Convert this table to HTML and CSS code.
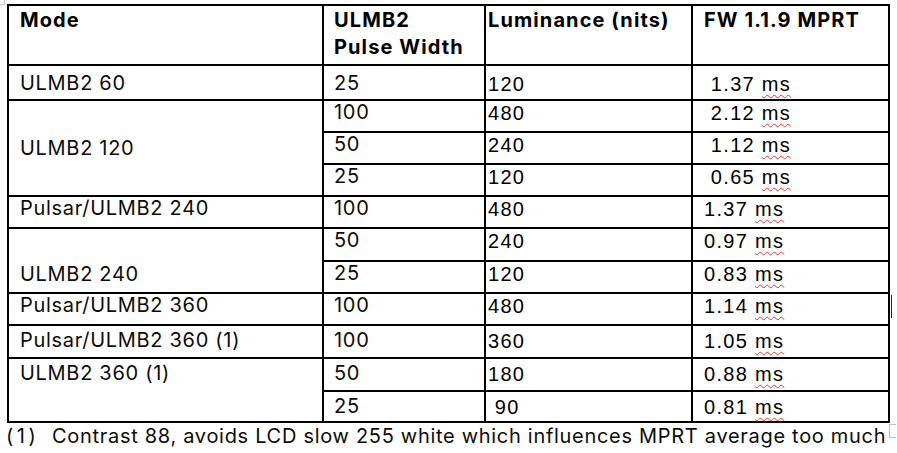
FILE: index.html
```html
<!DOCTYPE html>
<html lang="en">
<head>
<meta charset="utf-8">
<title>ULMB2 MPRT</title>
<link rel="stylesheet" href="styles.css">
</head>
<body>
<div class="page">
  <span class="handle"></span>
  <div class="tbl">
    <div class="c h">Mode</div>
    <div class="c h c2">ULMB2<br>Pulse Width</div>
    <div class="c h c3">Luminance (nits)</div>
    <div class="c h">FW 1.1.9 MPRT</div>

    <div class="c r1">ULMB2 60</div>
    <div class="c c2 r1">25</div>
    <div class="c c3 num r1">120</div>
    <div class="c num r1">&nbsp;1.37 <span class="sp">ms</span></div>

    <div class="c span3 mid">ULMB2 120</div>
    <div class="c c2">100</div>
    <div class="c c3 num">480</div>
    <div class="c num">&nbsp;2.12 <span class="sp">ms</span></div>
    <div class="c c2">50</div>
    <div class="c c3 num">240</div>
    <div class="c num">&nbsp;1.12 <span class="sp">ms</span></div>
    <div class="c c2">25</div>
    <div class="c c3 num">120</div>
    <div class="c num">&nbsp;0.65 <span class="sp">ms</span></div>

    <div class="c">Pulsar/ULMB2 240</div>
    <div class="c c2">100</div>
    <div class="c c3 num">480</div>
    <div class="c num">1.37 <span class="sp">ms</span></div>

    <div class="c span2 bot">ULMB2 240</div>
    <div class="c c2">50</div>
    <div class="c c3 num">240</div>
    <div class="c num">0.97 <span class="sp">ms</span></div>
    <div class="c c2">25</div>
    <div class="c c3 num">120</div>
    <div class="c num">0.83 <span class="sp">ms</span></div>

    <div class="c">Pulsar/ULMB2 360</div>
    <div class="c c2">100</div>
    <div class="c c3 num">480</div>
    <div class="c num">1.14 <span class="sp">ms</span></div>

    <div class="c low">Pulsar/ULMB2 360 (1)</div>
    <div class="c c2 low">100</div>
    <div class="c c3 num low">360</div>
    <div class="c num low">1.05 <span class="sp">ms</span></div>

    <div class="c span2 low">ULMB2 360 (1)</div>
    <div class="c c2 low">50</div>
    <div class="c c3 num low">180</div>
    <div class="c num low">0.88 <span class="sp">ms</span></div>
    <div class="c c2 low">25</div>
    <div class="c c3 num low">&nbsp;90</div>
    <div class="c num low">0.81 <span class="sp">ms</span></div>
  </div>
  <p class="note"><span class="mark">(1)</span><span>Contrast 88, avoids LCD slow 255 white which influences MPRT average too much</span></p>
  <span class="endmark"></span>
  <span class="caret"></span>
</div>
</body>
</html>
```

FILE: styles.css
```css
body {
  margin: 0;
  background: #ffffff;
  color: #000000;
}

.page {
  position: relative;
  width: 897px;
  height: 453px;
  box-sizing: border-box;
  padding: 4px 0 0 7px;
  font-family: Inter, "Open Sans", sans-serif;
  font-size: 20px;
  letter-spacing: 0.7px;
  color: #0c0c0c;
}

.handle {
  position: absolute;
  left: 0;
  top: 0;
  width: 4px;
  height: 4px;
  border-right: 1px solid #c8c8c8;
  border-bottom: 1px solid #c8c8c8;
}

.tbl {
  display: grid;
  width: max-content;
  grid-template-columns: 315px 162px 207px 197px;
  grid-template-rows: 60px 35px 32px 32px 32px 32px 33px 32px 32px 33px 33px 31px;
  border-left: 2px solid #000;
  border-top: 2px solid #000;
}

.c {
  box-sizing: border-box;
  border-right: 2px solid #000;
  border-bottom: 2px solid #000;
  padding: 1px 0 0 11px;
  line-height: 20px;
  white-space: nowrap;
}

.c2 { padding-left: 10px; }
.c3 { padding-left: 2px; }

.h {
  font-weight: 700;
  letter-spacing: 1.1px;
  line-height: 27px;
  padding-top: 1px;
  color: #000;
}

.num {
  font-family: "Liberation Sans", Arial, sans-serif;
  letter-spacing: 1.3px;
  padding-top: 2px;
  color: #000;
}

.r1 { padding-top: 7px; }
.r1.num { padding-top: 8px; }
.low { padding-top: 4px; }
.low.num { padding-top: 5px; }

.span3 { grid-row: span 3; }
.span2 { grid-row: span 2; }

.mid {
  display: flex;
  align-items: center;
  padding-top: 0;
}

.bot {
  display: flex;
  align-items: flex-end;
  padding-bottom: 8px;
}

.sp {
  text-decoration: underline wavy #e03a2c;
  text-decoration-thickness: 1px;
  text-underline-offset: 3px;
}

.note {
  display: flex;
  margin: 3px 0 0 -1px;
  line-height: 20px;
  white-space: nowrap;
}

.mark {
  width: 46px;
  flex: none;
  letter-spacing: 3.5px;
}

.endmark {
  position: absolute;
  left: 889px;
  top: 424px;
  width: 6px;
  height: 12px;
  border-left: 1px solid #c0c0c0;
  border-top: 1px solid #c0c0c0;
  border-bottom: 1px solid #c0c0c0;
}

.caret {
  position: absolute;
  left: 891px;
  top: 295px;
  width: 1px;
  height: 23px;
  background: #222;
}
```
